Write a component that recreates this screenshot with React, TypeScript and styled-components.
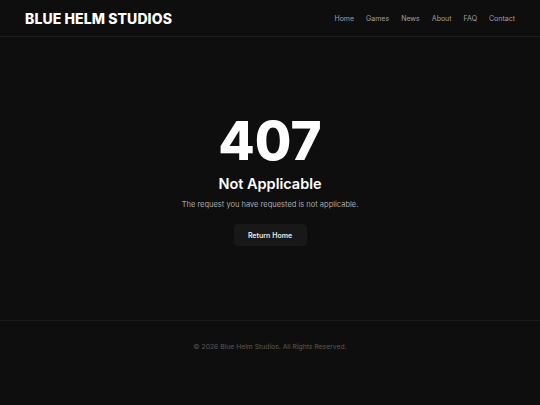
import React from 'react'
import styled, { createGlobalStyle } from 'styled-components'

const GlobalStyle = createGlobalStyle`
  html, body {
    margin: 0;
    padding: 0;
    background: #0e0e0e;
  }
  body {
    font-family: Inter, "Liberation Sans", sans-serif;
    color: #fff;
  }
`

const Page = styled.div`
  min-height: 405px;
  display: flex;
  flex-direction: column;
  background: #0e0e0e;
`

const Header = styled.header`
  height: 36px;
  display: flex;
  align-items: center;
  justify-content: space-between;
  padding: 0 25px 0 25px;
  border-bottom: 1px solid #1a1a1a;
`

const Logo = styled.div`
  font-size: 14px;
  font-weight: 800;
  letter-spacing: 0.1px;
  color: #fff;
`

const Nav = styled.nav`
  display: flex;
  gap: 12px;
`

const NavLink = styled.a`
  font-size: 7px;
  color: #a0a0a0;
  text-decoration: none;
`

const Main = styled.main`
  height: 284px;
  display: flex;
  flex-direction: column;
  align-items: center;
  justify-content: center;
  padding-top: 4px;
  box-sizing: border-box;
  border-bottom: 1px solid #1a1a1a;
`

const Code = styled.h1`
  margin: 0;
  font-size: 53px;
  font-weight: 800;
  line-height: 1;
  color: #fff;
`

const Title = styled.h2`
  margin: 9px 0 0;
  font-size: 14.5px;
  font-weight: 600;
  line-height: 1;
`

const Message = styled.p`
  margin: 9px 0 0;
  font-size: 7.5px;
  color: #a8a8a8;
`

const Button = styled.a`
  margin-top: 15px;
  display: inline-flex;
  align-items: center;
  justify-content: center;
  width: 73px;
  height: 22px;
  border-radius: 4px;
  background: #181818;
  color: #e8e8e8;
  font-size: 7px;
  font-weight: 600;
  text-decoration: none;
`

const Footer = styled.footer`
  height: 50px;
  display: flex;
  align-items: center;
  justify-content: center;
  font-size: 6.8px;
  color: #5a5a5a;
`

const links = ['Home', 'Games', 'News', 'About', 'FAQ', 'Contact']

export default function App() {
  return (
    <>
      <GlobalStyle />
      <Page>
        <Header>
          <Logo>BLUE HELM STUDIOS</Logo>
          <Nav>
            {links.map((l) => (
              <NavLink key={l} href="#">
                {l}
              </NavLink>
            ))}
          </Nav>
        </Header>
        <Main>
          <Code>407</Code>
          <Title>Not Applicable</Title>
          <Message>The request you have requested is not applicable.</Message>
          <Button href="#">Return Home</Button>
        </Main>
        <Footer>© 2026 Blue Helm Studios. All Rights Reserved.</Footer>
      </Page>
    </>
  )
}
